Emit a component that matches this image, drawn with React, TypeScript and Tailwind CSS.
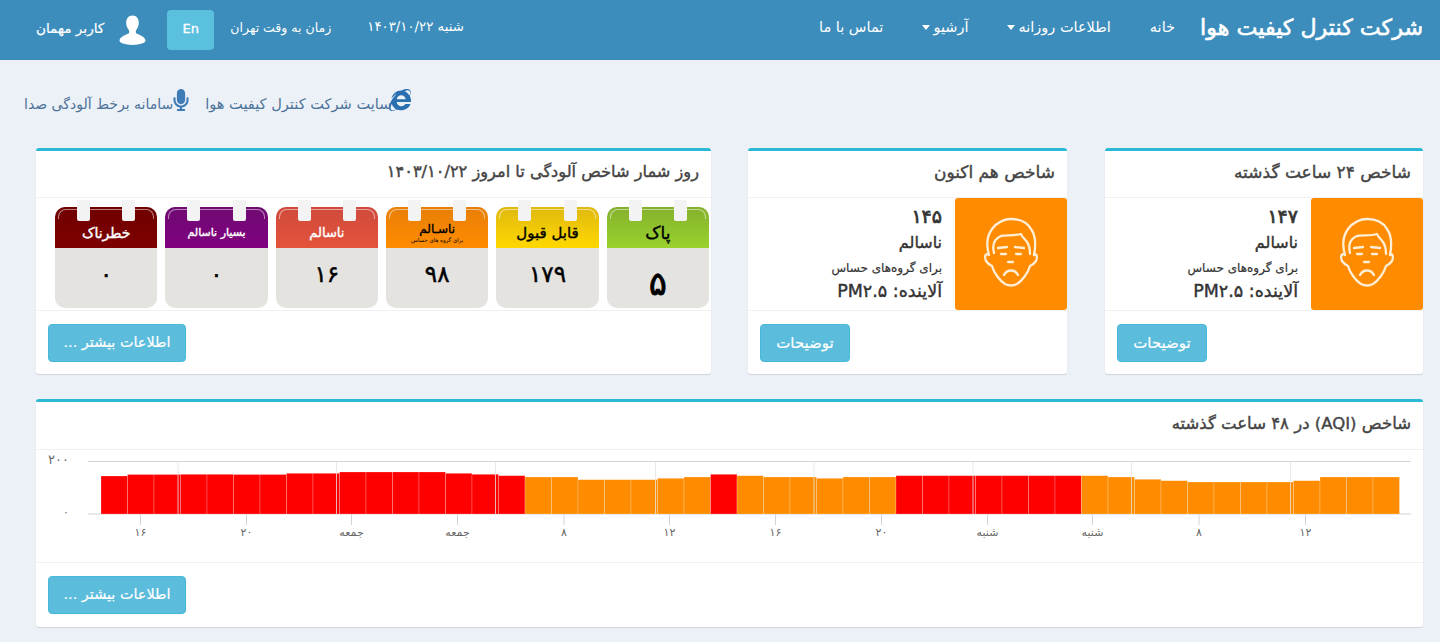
import React from 'react';
import { FaInternetExplorer, FaMicrophone } from 'react-icons/fa';

const R = '#ff0000';
const O = '#ff8c00';

const bars: [number, string][] = [
  [38, R], [39.5, R], [39.5, R], [39.7, R], [39.7, R], [39.5, R], [39.5, R], [40.7, R], [40.7, R], [42, R],
  [42, R], [42, R], [42, R], [40.7, R], [39.7, R], [38.3, R], [37, O], [37, O], [34.3, O], [34.3, O],
  [34.3, O], [35.7, O], [37, O], [39.7, R], [38.3, O], [37, O], [37, O], [35.7, O], [37, O], [37, O],
  [38.3, R], [38.3, R], [38.3, R], [38.3, R], [38.3, R], [38.3, R], [38.3, R], [38.3, O], [37, O], [34.7, O],
  [33.3, O], [32, O], [32, O], [32, O], [32, O], [33.3, O], [37, O], [37, O], [37, O],
];

const gridLines = [178, 336.5, 495.5, 655.5, 814, 973, 1131.5, 1290.5];

const ticks: [number, string][] = [
  [140.5, '۱۶'], [246.5, '۲۰'], [351.5, 'جمعه'], [457.5, 'جمعه'], [564, '۸'], [669.5, '۱۲'],
  [775.5, '۱۶'], [881.5, '۲۰'], [987.5, 'شنبه'], [1092.5, 'شنبه'], [1199, '۸'], [1305.5, '۱۲'],
];

const calendars = [
  { title: 'پاک', value: '۵', head: 'from-[#84b12c] to-[#9ad22d]', text: 'text-black', size: 'text-[17px]', big: true },
  { title: 'قابل قبول', value: '۱۷۹', head: 'from-[#e0b90e] to-[#ffd800]', text: 'text-black', size: 'text-[15px]' },
  { title: 'ناسـالم', value: '۹۸', head: 'from-[#e87f08] to-[#ff8c00]', text: 'text-black', size: 'text-[12px]', sub: 'برای گروه های حساس' },
  { title: 'ناسالم', value: '۱۶', head: 'from-[#cf4a3c] to-[#e4533a]', text: 'text-white', size: 'text-[13px]' },
  { title: 'بسیار ناسالم', value: '۰', head: 'from-[#6f0a72] to-[#800080]', text: 'text-white', size: 'text-[11px]' },
  { title: 'خطرناک', value: '۰', head: 'from-[#700000] to-[#7e0000]', text: 'text-white', size: 'text-[14px]' },
];

function SadFace() {
  return (
    <svg viewBox="0 0 112 112" className="h-[112px] w-[112px]" fill="none" stroke="#ffeed6" strokeWidth="2.3" strokeLinecap="round" strokeLinejoin="round">
      <path d="M34 57 C31 47 32 38 37 31 C42 24 50 21 56 21 C64 21 72 24 76 31 C81 38 81 47 79 57" />
      <path d="M33 56 C29 56 30 61 31 63 C33 66 35 67 37 68 C39 75 45 83 50 86 C54 88 58 88 62 86 C67 83 73 75 75 68 C77 67 79 66 81 63 C82 61 83 56 79 56" />
      <path d="M39 55 C37 47 39 41 46 38 C52 37 60 38 66 36 C67 39 70 41 72 44 C74 47 75 51 75 56" />
      <path d="M43 50 L52 49 M60 49 L69 50 M46 56 L51 56 M61 56 L66 56 M53 64 L58 64" />
      <path d="M49 77 C52 71 60 71 63 77" />
    </svg>
  );
}

function UserIcon() {
  return (
    <svg viewBox="0 0 28 32" className="h-[32px] w-[27px]" fill="#fff">
      <path d="M14 1 C9.5 1 7.5 4.500 7.500 8.500 C7.500 12 9 15 10.500 16.500 L10.500 19 C8 21 1 22 .5 27 C.5 29.500 6 31.500 14 31.500 C22 31.500 27.500 29.500 27.500 27 C27 22 20 21 17.500 19 L17.500 16.500 C19 15 20.500 12 20.500 8.500 C20.500 4.500 18.500 1 14 1 Z" />
    </svg>
  );
}

function CardHeader({ title, className }: { title: string; className: string }) {
  return (
    <div className={`flex items-center border-b border-[#f0f0f0] pr-[12px] pb-[3px] text-[#444] [-webkit-text-stroke:0.4px] ${className}`}>
      {title}
    </div>
  );
}

function InfoButton({ label, className }: { label: string; className: string }) {
  return (
    <div className="flex justify-end">
      <button type="button" className={`h-[38px] rounded-[4px] border border-[#46b8da] bg-[#5bbcdc] text-white [-webkit-text-stroke:0.2px] ${className}`}>
        {label}
      </button>
    </div>
  );
}

function IndexCard({ title, value, className }: { title: string; value: string; className: string }) {
  return (
    <div className={`rounded-[3px] border-t-[3px] border-[#2cb9d8] bg-white shadow-[0_1px_1px_rgba(0,0,0,0.12)] ${className}`}>
      <CardHeader title={title} className="h-[47px] text-[17px]" />
      <div className="flex h-[113px] border-b border-[#f0f0f0]">
        <div className="h-[112px] w-[112px] shrink-0 rounded-[3px] bg-[#ff8c00]">
          <SadFace />
        </div>
        <div className="flex-1 pt-[5px] pr-[13px] text-[#333] [-webkit-text-stroke:0.4px]">
          <div className="text-[19px] leading-[26px] [-webkit-text-stroke:0.7px]">{value}</div>
          <div className="mt-[2px] text-[16px] leading-[24px]">ناسالم</div>
          <div className="mt-[3px] text-[12px] leading-[20px] [-webkit-text-stroke:0.2px]">برای گروه‌های حساس</div>
          <div className="mt-[1px] text-[17.5px] leading-[24px]">آلاینده: PM۲.۵</div>
        </div>
      </div>
      <div className="px-[12px] pt-[13px] pb-[12px]">
        <InfoButton label="توضیحات" className="w-[90px] text-[15px]" />
      </div>
    </div>
  );
}

function CalendarCard({ title, value, head, text, size, sub, big }: (typeof calendars)[number]) {
  return (
    <div className="relative h-[101px] overflow-visible rounded-[10px] bg-[#e4e3e0]">
      <div className={`relative flex h-[41px] flex-col items-center justify-center rounded-t-[10px] bg-gradient-to-b pt-[10px] [-webkit-text-stroke:0.4px] ${head} ${text}`}>
        <div className="absolute inset-x-[3px] top-[2px] h-[10px] rounded-t-[8px] border-x border-t border-white/50" />
        <span className={`leading-[16px] ${size}`}>{title}</span>
        {sub && <span className="text-[5.500px] leading-[7px] [-webkit-text-stroke:0px]">{sub}</span>}
      </div>
      <div className="absolute top-[-7px] right-[22px] h-[21px] w-[13px] rounded-b-[2px] bg-[#f3f3f3]" />
      <div className="absolute top-[-7px] left-[22px] h-[21px] w-[13px] rounded-b-[2px] bg-[#f3f3f3]" />
      <div className={`flex h-[60px] items-center justify-center text-black [-webkit-text-stroke:0.5px] ${big ? 'pt-[11px] text-[33px] [-webkit-text-stroke:1px]' : 'pb-[8px] text-[23px]'}`}>
        <span className="tracking-[2px]">{value}</span>
      </div>
    </div>
  );
}

function AqiChart() {
  return (
    <svg width="1387" height="112" viewBox="36 450 1387 112" className="block text-[11px]">
      <line x1="88" x2="1411" y1="461.5" y2="461.5" stroke="#d4d4d4" />
      <line x1="88" x2="1411" y1="514" y2="514" stroke="#d4d4d4" />
      {bars.map(([h, color], i) => (
        <rect key={i} x={101 + i * 26.5} y={514 - h} width={26.5} height={h} fill={color} stroke="#fff" strokeOpacity={0.3} strokeWidth={0.7} />
      ))}
      {gridLines.map((x) => (
        <line key={x} x1={x} x2={x} y1="461.500" y2="514" stroke="#e4e4e4" strokeOpacity={0.8} />
      ))}
      {ticks.map(([x, label], i) => (
        <g key={i}>
          <line x1={x} x2={x} y1="514" y2="525" stroke="#d4d4d4" />
          <text x={x} y="536" textAnchor="middle" fill="#666">{label}</text>
        </g>
      ))}
      <text x="69" y="464" textAnchor="start" fill="#666" className="text-[13px]">۲۰۰</text>
      <text x="69" y="516" textAnchor="start" fill="#666">۰</text>
    </svg>
  );
}

export default function App() {
  return (
    <div dir="rtl" className="min-h-[642px] bg-[#ecf0f7] font-['DejaVu_Sans','Noto_Sans',sans-serif]">
      <header className="flex h-[60px] items-center justify-between bg-[#3c8dbc] pr-[17px] pl-[36px] text-white">
        <div className="flex items-center pb-[5px]">
          <div className="text-[22.2px] [-webkit-text-stroke:0.6px]">شرکت کنترل کیفیت هوا</div>
          <nav className="mr-[25px] flex items-center gap-[39px] text-[14.5px]">
            <span>خانه</span>
            <span className="flex items-center gap-[3px]">اطلاعات روزانه<i className="h-0 w-0 border-x-[4px] border-t-[5px] border-x-transparent border-t-white" /></span>
            <span className="flex items-center gap-[3px]">آرشیو<i className="h-0 w-0 border-x-[4px] border-t-[5px] border-x-transparent border-t-white" /></span>
            <span>تماس با ما</span>
          </nav>
        </div>
        <div className="flex items-center text-[12.500px]">
          <span className="mb-[6px] text-[13.300px]">شنبه ۱۴۰۳/۱۰/۲۲</span>
          <span className="mr-[36px] mb-[4px]">زمان به وقت تهران</span>
          <button type="button" className="mr-[16px] h-[40px] w-[47px] rounded-[4px] bg-[#5bc0de] pb-[3px] text-[13px] text-white [-webkit-text-stroke:0.3px]">En</button>
          <span className="mr-[21px]"><UserIcon /></span>
          <span className="mr-[15px] mb-[4px] text-[13.6px] [-webkit-text-stroke:0.2px]">کاربر مهمان</span>
        </div>
      </header>

      <div className="flex h-[88px] items-center justify-end pl-[24px] text-[#4b7299]">
        <a className="flex items-center text-[14.600px]">
          <FaInternetExplorer className="mb-[8px] ml-[-3px] h-[22px] w-[22px] text-[#2a6fb0]" />
          <span>سایت شرکت کنترل کیفیت هوا</span>
        </a>
        <a className="mr-[16px] flex items-center text-[14px]">
          <FaMicrophone className="mb-[8px] h-[22px] w-[16px] text-[#3e7cb8]" />
          <span>سامانه برخط آلودگی صدا</span>
        </a>
      </div>

      <main className="pr-[17px] pl-[36px]">
        <div className="flex">
          <IndexCard title="شاخص ۲۴ ساعت گذشته" value="۱۴۷" className="w-[318px] shrink-0" />
          <IndexCard title="شاخص هم اکنون" value="۱۴۵" className="mr-[38px] w-[319px] shrink-0" />
          <div className="mr-[37px] w-[675px] shrink-0 rounded-[3px] border-t-[3px] border-[#2cb9d8] bg-white shadow-[0_1px_1px_rgba(0,0,0,0.12)]">
            <CardHeader title="روز شمار شاخص آلودگی تا امروز ۱۴۰۳/۱۰/۲۲" className="h-[47px] text-[16.2px]" />
            <div className="grid h-[113px] grid-cols-6 gap-[8px] border-b border-[#f0f0f0] pt-[9px] pr-[2px] pl-[19px]">
              {calendars.map((c) => (
                <CalendarCard key={c.head} {...c} />
              ))}
            </div>
            <div className="px-[12px] pt-[13px] pb-[12px]">
              <InfoButton label="اطلاعات بیشتر ..." className="w-[138px] text-[14.400px]" />
            </div>
          </div>
        </div>

        <div className="mt-[25px] rounded-[3px] border-t-[3px] border-[#2cb9d8] bg-white shadow-[0_1px_1px_rgba(0,0,0,0.12)]">
          <CardHeader title="شاخص (AQI) در ۴۸ ساعت گذشته" className="h-[48px] text-[16.5px]" />
          <div className="h-[113px] border-b border-[#f0f0f0]">
            <AqiChart />
          </div>
          <div className="px-[12px] pt-[13px] pb-[13px]">
            <InfoButton label="اطلاعات بیشتر ..." className="w-[138px] text-[14.400px]" />
          </div>
        </div>
      </main>
    </div>
  );
}
